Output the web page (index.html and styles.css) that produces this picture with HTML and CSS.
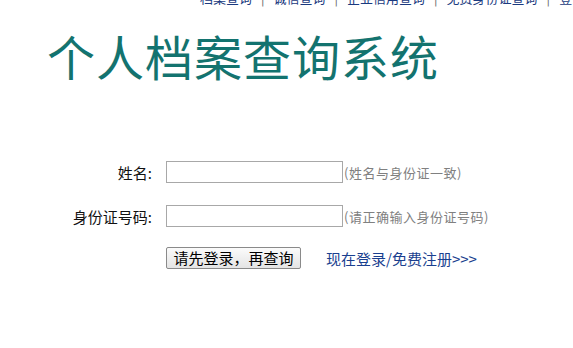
FILE: index.html
```html
<!DOCTYPE html>
<html lang="zh-CN">
<head>
<meta charset="utf-8">
<title>个人档案查询系统</title>
<link rel="stylesheet" href="styles.css">
</head>
<body>
<div class="topnav">
  <a href="#">档案查询</a><span class="sep">|</span><a href="#">诚信查询</a><span class="sep">|</span><a href="#">企业信用查询</a><span class="sep">|</span><a href="#">免费身份证查询</a><span class="sep">|</span><a href="#">登录</a>
</div>
<h1 class="title">个人档案查询系统</h1>
<form class="form">
  <div class="row">
    <label class="label">姓名:</label>
    <input class="input" type="text">
    <span class="hint">(姓名与身份证一致)</span>
  </div>
  <div class="row">
    <label class="label">身份证号码:</label>
    <input class="input" type="text">
    <span class="hint">(请正确输入身份证号码)</span>
  </div>
  <div class="actions">
    <button class="btn" type="button">请先登录，再查询</button>
    <a class="reg" href="#">现在登录/免费注册&gt;&gt;&gt;</a>
  </div>
</form>
</body>
</html>
```
FILE: styles.css
```css
html, body {
  margin: 0;
  padding: 0;
  background: #fff;
  width: 573px;
  height: 348px;
  overflow: hidden;
  font-family: "Noto Sans CJK SC", "Noto Sans", sans-serif;
}
.topnav {
  margin-top: -8px;
  padding-left: 200px;
  height: 12px;
  font-size: 13px;
  line-height: 12px;
  white-space: nowrap;
  color: #1a3a80;
}
.topnav a {
  color: #1a3a80;
  text-decoration: none;
}
.topnav .sep {
  color: #666;
  padding: 0 9px;
}
.title {
  margin: 26px 0 0 47px;
  font-size: 48px;
  line-height: 50px;
  font-weight: normal;
  color: #13736f;
  letter-spacing: 1px;
}
.form {
  margin-top: 81px;
  display: flex;
  flex-direction: column;
}
.row {
  display: flex;
  align-items: center;
  height: 22px;
  margin-bottom: 22px;
}
.label {
  width: 152px;
  text-align: right;
  font-size: 15px;
  color: #111;
  margin-right: 14px;
}
.input {
  box-sizing: border-box;
  width: 177px;
  height: 22px;
  margin: 0;
  border: 1px solid #a8a8a8;
  padding: 0 3px;
  background: #fff;
}
.hint {
  margin-left: 1px;
  font-size: 13px;
  letter-spacing: 0.5px;
  color: #808080;
}
.actions {
  display: flex;
  align-items: center;
  padding-left: 166px;
  margin-top: -2px;
}
.btn {
  box-sizing: border-box;
  width: 135px;
  height: 22px;
  padding: 0;
  font-family: "Noto Sans CJK SC", sans-serif;
  font-size: 15px;
  line-height: 20px;
  color: #000;
  background: linear-gradient(#fbfbfb, #e4e4e4);
  border: 1px solid #8a8a8a;
  border-radius: 2px;
}
.reg {
  margin-left: 25px;
  font-size: 15px;
  color: #1a3f8f;
  text-decoration: none;
}
```
